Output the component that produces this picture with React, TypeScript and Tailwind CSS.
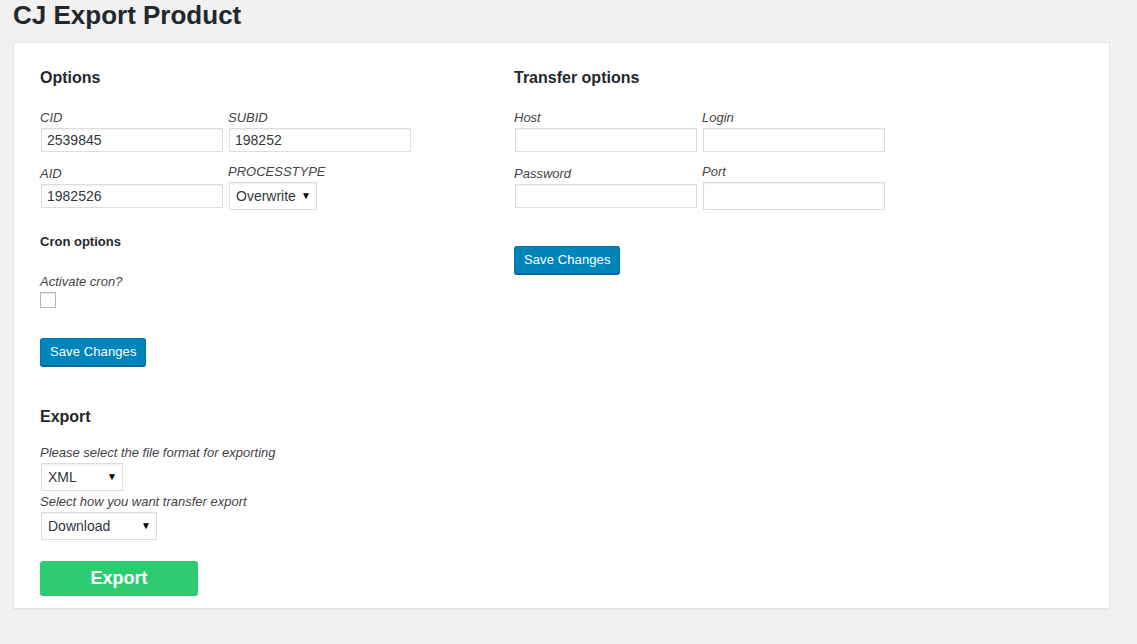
import React from "react";

const Label = ({ children, className = "" }: { children: React.ReactNode; className?: string }) => (
  <div className={"text-[13px] leading-4 italic text-[#444] " + className}>{children}</div>
);

const TextBox = ({ value = "", className = "" }: { value?: string; className?: string }) => (
  <input
    readOnly
    value={value}
    className={
      "block ml-px w-[182px] border border-[#ddd] bg-white px-[5px] text-[14px] text-[#32373c] shadow-[inset_0_1px_2px_rgba(0,0,0,0.07)] outline-none " +
      className
    }
  />
);

const SelectBox = ({ value, width, className = "" }: { value: string; width: string; className?: string }) => (
  <div
    className={
      "ml-px flex h-[28px] items-center justify-between border border-[#ddd] bg-white pl-[6px] pr-[5px] text-[14px] text-[#32373c] shadow-[inset_0_1px_2px_rgba(0,0,0,0.07)] " +
      width +
      " " +
      className
    }
  >
    <span>{value}</span>
    <span className="text-[10px] leading-none text-black">▼</span>
  </div>
);

const SaveButton = ({ className = "" }: { className?: string }) => (
  <button
    className={
      "block h-[28px] rounded-[3px] border border-[#0073aa] border-b-[#006799] bg-[#0085ba] px-[9px] text-[13px] tracking-[0.1px] text-white shadow-[0_1px_0_#006799] " +
      className
    }
  >
    Save Changes
  </button>
);

export default function App() {
  return (
    <div className="min-h-screen bg-[#f1f1f1] pl-[13px] pr-[27px] font-['Liberation_Sans',Arial,sans-serif] text-[#444]">
      <h1 className="text-[26px] font-bold leading-[30px] text-[#23282d]">CJ Export Product</h1>

      <div className="mt-[12px] flex border border-[#e5e5e5] bg-white pb-[12px] pl-[26px] pt-[25px] shadow-[0_1px_1px_rgba(0,0,0,0.04)]">
        {/* left column */}
        <div className="w-[474px]">
          <h2 className="text-[16px] font-bold leading-5 text-[#23282d]">Options</h2>

          <div className="mt-[22px] grid grid-cols-[188px_188px]">
            <div>
              <Label>CID</Label>
              <TextBox value="2539845" className="mt-[2px] h-[24px]" />
            </div>
            <div>
              <Label>SUBID</Label>
              <TextBox value="198252" className="mt-[2px] h-[24px]" />
            </div>
          </div>

          <div className="mt-[12px] grid grid-cols-[188px_188px]">
            <div className="pt-[2px]">
              <Label>AID</Label>
              <TextBox value="1982526" className="mt-[2px] h-[24px]" />
            </div>
            <div>
              <Label>PROCESSTYPE</Label>
              <SelectBox value="Overwrite" width="w-[88px]" className="mt-[2px]" />
            </div>
          </div>

          <h3 className="mt-[24px] text-[13px] font-bold leading-4 text-[#23282d]">Cron options</h3>

          <Label className="mt-[24px]">Activate cron?</Label>
          <div className="mt-[2px] h-[16px] w-[16px] border border-[#b4b9be] bg-white shadow-[inset_0_1px_2px_rgba(0,0,0,0.1)]" />

          <SaveButton className="mt-[30px]" />

          <h2 className="mt-[41px] text-[16px] font-bold leading-5 text-[#23282d]">Export</h2>

          <Label className="mt-[18px]">Please select the file format for exporting</Label>
          <SelectBox value="XML" width="w-[82px]" className="mt-[2px]" />
          <Label className="mt-[3px]">Select how you want transfer export</Label>
          <SelectBox value="Download" width="w-[116px]" className="mt-[2px]" />

          <button className="mt-[21px] block h-[35px] w-[158px] rounded-[3px] bg-[#2ecc71] text-[18px] font-bold text-white">
            Export
          </button>
        </div>

        {/* right column */}
        <div className="w-[474px]">
          <h2 className="text-[16px] font-bold leading-5 text-[#23282d]">Transfer options</h2>

          <div className="mt-[22px] grid grid-cols-[188px_188px]">
            <div>
              <Label>Host</Label>
              <TextBox className="mt-[2px] h-[24px]" />
            </div>
            <div>
              <Label>Login</Label>
              <TextBox className="mt-[2px] h-[24px]" />
            </div>
          </div>

          <div className="mt-[12px] grid grid-cols-[188px_188px]">
            <div className="pt-[2px]">
              <Label>Password</Label>
              <TextBox className="mt-[2px] h-[24px]" />
            </div>
            <div>
              <Label>Port</Label>
              <TextBox className="mt-[2px] h-[28px]" />
            </div>
          </div>

          <SaveButton className="mt-[36px]" />
        </div>
      </div>
    </div>
  );
}
